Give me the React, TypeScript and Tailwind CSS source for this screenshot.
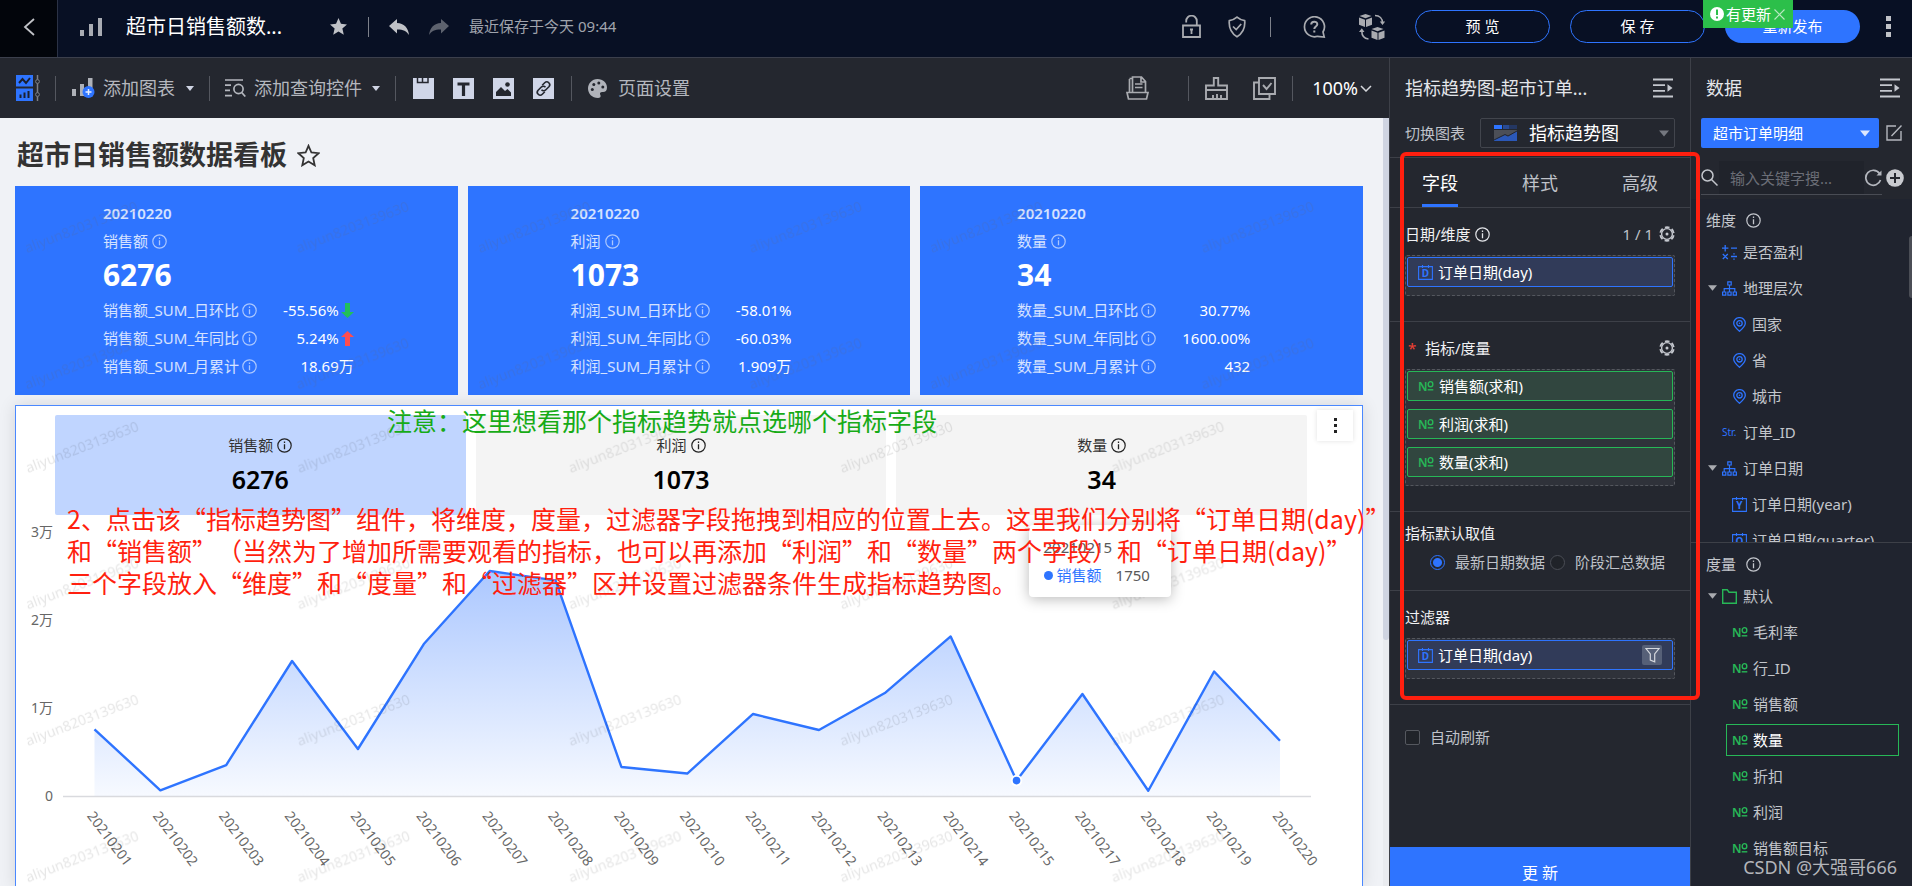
import type { ReactNode } from 'react'
import clsx from 'clsx'

const kpiCards = [
  {
    name: '销售额',
    value: '6276',
    rows: [
      { label: '销售额_SUM_日环比', value: '-55.56%', trend: 'down' },
      { label: '销售额_SUM_年同比', value: '5.24%', trend: 'up' },
      { label: '销售额_SUM_月累计', value: '18.69万', trend: '' },
    ],
  },
  {
    name: '利润',
    value: '1073',
    rows: [
      { label: '利润_SUM_日环比', value: '-58.01%', trend: '' },
      { label: '利润_SUM_年同比', value: '-60.03%', trend: '' },
      { label: '利润_SUM_月累计', value: '1.909万', trend: '' },
    ],
  },
  {
    name: '数量',
    value: '34',
    rows: [
      { label: '数量_SUM_日环比', value: '30.77%', trend: '' },
      { label: '数量_SUM_年同比', value: '1600.00%', trend: '' },
      { label: '数量_SUM_月累计', value: '432', trend: '' },
    ],
  },
]

const series = [
  { date: '20210201', value: 7580 },
  { date: '20210202', value: 650 },
  { date: '20210203', value: 3520 },
  { date: '20210204', value: 15340 },
  { date: '20210205', value: 5340 },
  { date: '20210206', value: 17270 },
  { date: '20210207', value: 25570 },
  { date: '20210208', value: 24500 },
  { date: '20210209', value: 3300 },
  { date: '20210210', value: 2550 },
  { date: '20210211', value: 9320 },
  { date: '20210212', value: 7500 },
  { date: '20210213', value: 11700 },
  { date: '20210214', value: 18130 },
  { date: '20210215', value: 1750 },
  { date: '20210217', value: 11590 },
  { date: '20210218', value: 600 },
  { date: '20210219', value: 14150 },
  { date: '20210220', value: 6276 },
]

const CHART_W = 1346
const CHART_H = 371
const BASE_Y = 281
const ACTIVE = 14

const px = (i: number) => 78.5 + i * 65.86
const py = (v: number) => BASE_Y - (v * 88) / 10000

/* ---------- icons ---------- */

function InfoIcon({ className }: { className?: string }) {
  return (
    <svg viewBox="0 0 15 15" className={clsx('shrink-0 w-[15px] h-[15px]', className)} fill="none" stroke="currentColor">
      <circle cx="7.5" cy="7.5" r="6.7" strokeWidth="1.2" />
      <path d="M7.5 6.3v5M7.5 3.6v1.4" strokeWidth="1.3" />
    </svg>
  )
}

function GearIcon() {
  return (
    <svg viewBox="0 0 16 16" className="w-4 h-4 text-[#c4c7ce]" fill="none" stroke="currentColor">
      <circle cx="8" cy="8" r="5.4" strokeWidth="1.4" />
      <circle cx="8" cy="8" r="6.8" strokeWidth="1.8" strokeDasharray="4.6 2.520" strokeDashoffset="-1.260" />
      <circle cx="8" cy="8" r="1.5" fill="currentColor" stroke="none" />
    </svg>
  )
}

function CollapseIcon() {
  return (
    <svg viewBox="0 0 20 20" className="w-5 h-5 text-[#c4c7ce]" fill="none" stroke="currentColor" strokeWidth="1.8">
      <path d="M0 1.5h20M0 7.2h12M0 12.8h12M0 18.5h20" />
      <path d="M14.5 6.2 19.5 10l-5 3.8z" fill="currentColor" stroke="none" />
    </svg>
  )
}

function Caret({ className }: { className?: string }) {
  return (
    <svg viewBox="0 0 10 6" className={clsx('shrink-0', className)} fill="currentColor">
      <path d="M0 0h10L5 6z" />
    </svg>
  )
}

function DateIcon({ letter }: { letter: string }) {
  return (
    <svg viewBox="0 0 15 15" className="shrink-0 w-[15px] h-[15px] text-[#2e74ff]" fill="none" stroke="currentColor">
      <path d="M.6 1.6h13.8v12.8H.6zM4.5 0v3M10.5 0v3" strokeWidth="1.1" />
      <text x="7.5" y="11.8" textAnchor="middle" fontSize="10" fontWeight="700" fill="currentColor" stroke="none">{letter}</text>
    </svg>
  )
}

function NumIcon() {
  return (
    <svg viewBox="0 0 16 14" className="shrink-0 w-4 h-[14px] text-[#27b757]" fill="none" stroke="currentColor" strokeWidth="1.4">
      <text x="0" y="11.500" fontSize="12" fontWeight="600" fill="currentColor" stroke="none">N</text>
      <ellipse cx="12.500" cy="5.200" rx="2.300" ry="2.600" />
      <path d="M9.700 10.800h5.600" />
    </svg>
  )
}

function PinIcon() {
  return (
    <svg viewBox="0 0 15 15" className="shrink-0 w-[15px] h-[15px] text-[#2e74ff]" fill="none" stroke="currentColor" strokeWidth="1.3">
      <path d="M7.5 14.3C4 11.2 1.7 9 1.7 6.2a5.8 5.6 0 0 1 11.6 0c0 2.8-2.3 5-5.8 8.1z" />
      <circle cx="7.5" cy="6.3" r="2.7" />
      <circle cx="7.5" cy="6.3" r=".8" fill="currentColor" stroke="none" />
    </svg>
  )
}

function TreeIcon() {
  return (
    <svg viewBox="0 0 15 15" className="shrink-0 w-[15px] h-[15px] text-[#2e74ff]" fill="none" stroke="currentColor" strokeWidth="1.2">
      <path d="M5.8.8h3.4V4H5.8zM.6 11h3.2v3.2H.6zM5.9 11h3.2v3.2H5.9zM11.2 11h3.2v3.2h-3.2zM7.5 4v7M2.2 11V7.6h10.6V11" />
    </svg>
  )
}

function CalcIcon() {
  return (
    <svg viewBox="0 0 15 15" className="shrink-0 w-[15px] h-[15px] text-[#2e74ff]" fill="none" stroke="currentColor" strokeWidth="1.3">
      <path d="M3.2 0v6.4M0 3.2h6.4M9 3.2h6M.8 9l5 5M5.8 9l-5 5M9 11.5h6M11.3 8.8h1.4M11.3 14.2h1.4" />
    </svg>
  )
}

function FolderIcon() {
  return (
    <svg viewBox="0 0 15 15" className="shrink-0 w-[15px] h-[15px] text-[#27b757]" fill="none" stroke="currentColor" strokeWidth="1.4">
      <path d="M.7.8h4.6L7 3.2h7.3v11H.7z" />
    </svg>
  )
}

function Divider({ className }: { className?: string }) {
  return <span className={clsx('w-px shrink-0', className)} />
}

/* ---------- header ---------- */

function Header() {
  return (
    <header className="flex h-[58px] shrink-0 border-b border-[#3b3f4c] bg-[#081024] text-[#c0c2c7]">
      <button aria-label="返回" className="flex items-center justify-center w-[58px] pb-1 border-r border-[#2b3245] bg-[#02050b]">
        <svg viewBox="0 0 12 18" className="w-3 h-[18px]" fill="none" stroke="currentColor" strokeWidth="1.8">
          <path d="M11 1 2 9l9 8" />
        </svg>
      </button>
      <div className="flex flex-1 items-center pb-1">
        <svg viewBox="0 0 22 18" className="ml-[22px] w-[22px] h-[18px]" fill="#a9acb3">
          <path d="M0 12h4v6H0zM9 6h4v12H9zM18 0h4v18h-4z" />
        </svg>
        <h1 className="ml-6 text-xl font-normal text-white">超市日销售额数...</h1>
        <button aria-label="收藏" className="ml-12">
          <svg viewBox="0 0 18 18" className="w-[17px] h-[17px]" fill="currentColor">
            <path d="m9 0 2.6 6.2 6.4.6-4.9 4.3 1.5 6.6L9 14.2l-5.6 3.5 1.5-6.6L0 6.8l6.4-.6z" />
          </svg>
        </button>
        <Divider className="ml-[21px] h-5 bg-[#7d818b]" />
        <button aria-label="撤销" className="ml-5">
          <svg viewBox="0 0 20 16" className="w-5 h-4" fill="currentColor">
            <path d="M8 0v4c7 .4 11 4.400 12 12-2.500-4-6-5.600-12-5.500V14.500L0 7z" />
          </svg>
        </button>
        <button aria-label="重做" className="ml-5 text-[#5d626e]">
          <svg viewBox="0 0 20 16" className="w-5 h-4" fill="currentColor">
            <path d="M12 0v4C5 4.400 1 8.400 0 16c2.500-4 6-5.600 12-5.500V14.500L20 7z" />
          </svg>
        </button>
        <span className="ml-5 text-[15px] text-[#a0a4ad]">最近保存于今天 09:44</span>

        <div className="flex items-center ml-auto pr-[21px]">
          <svg viewBox="0 0 19 23" className="mr-[27px] w-[19px] h-[23px]" fill="none" stroke="#a9abb0" strokeWidth="1.8">
            <path d="M1 10.500h17V22H1zM4.200 7.500V6a5.300 5.300 0 0 1 10.600 0v4.500" />
            <path d="M9.500 14v5M8 14.500h3" />
          </svg>
          <svg viewBox="0 0 18 22" className="mr-6 w-[18px] h-[22px]" fill="none" stroke="#a9abb0" strokeWidth="1.700">
            <path d="M9 1.200c2.300 2 4.800 3 7.700 3.500.6 7-1.700 12.500-7.700 16-6-3.500-8.300-9-7.700-16C4.200 4.200 6.700 3.200 9 1.200z" />
            <path d="m5 10.500 3.200 3 5-5.500" />
          </svg>
          <Divider className="mr-8 h-5 bg-[#7d818b]" />
          <svg viewBox="0 0 23 22" className="mr-[33px] w-[23px] h-[22px]" fill="none" stroke="#a9abb0" strokeWidth="1.700">
            <path d="M20 16a10 10 0 1 0-5.500 4.300l6.700.7z" />
            <path d="M8.200 8.500c0-3.800 6.100-3.700 6.100-.2 0 2.200-3 2.400-3 4.700M11.300 14.500v2" strokeWidth="2" />
          </svg>
          <svg viewBox="0 0 26 26" className="w-[26px] h-[26px]" fill="#a9abb0">
            <path d="m6.500 0 6 2-6 2.200-6-2.200zM0 3.500 6 5.700V13l-6-2.200zM13 3.500 7 5.700V13l6-2.200zM18.500 13l6 2-6 2.200-6-2.200zM12.500 16.500l6 2.200V26l-6-2.200zM25.500 16.500l-6 2.200V26l6-2.200z" />
            <path d="M16 1.500c4.500 0 7.500 3 7.500 7.500M9.500 25C5 24.500 2.800 21.500 2.800 17" fill="none" stroke="#a9abb0" strokeWidth="1.600" />
            <path d="M20.800 7.500h5.400L23.500 11zM0 18h5.500L2.800 14.200z" />
          </svg>
          <div className="flex gap-5 ml-[30px] text-[15px] text-white">
            <button className="w-[135px] h-[33px] rounded-full border border-[#2e74ff]">预 览</button>
            <button className="w-[135px] h-[33px] rounded-full border border-[#2e74ff]">保 存</button>
            <div className="relative">
              <button className="w-[135px] h-[33px] rounded-full bg-[#2e74ff]">重新发布</button>
              <div className="absolute -left-[22px] -top-[10px] flex items-center w-[90px] h-7 pl-[7px] bg-[#2cbf4a]">
                <svg viewBox="0 0 14 14" className="w-[14px] h-[14px] mr-[2px] shrink-0">
                  <circle cx="7" cy="7" r="7" fill="#fff" />
                  <path d="M7 2.500v5.500M7 9.600v1.800" stroke="#2cbf4a" strokeWidth="2" />
                </svg>
                <span className="text-[15px]">有更新</span>
                <button aria-label="关闭" className="ml-[3px]">
                  <svg viewBox="0 0 11 11" className="w-[11px] h-[11px]" stroke="#b9e8c2" strokeWidth="1.200">
                    <path d="m.5.5 10 10M10.500.5l-10 10" />
                  </svg>
                </button>
              </div>
            </div>
          </div>
          <button aria-label="更多" className="flex flex-col gap-[3px] ml-[26px]">
            <span className="size-[5px] bg-[#c0c2c7]" />
            <span className="size-[5px] bg-[#c0c2c7]" />
            <span className="size-[5px] bg-[#c0c2c7]" />
          </button>
        </div>
      </div>
    </header>
  )
}

/* ---------- toolbar ---------- */

function SquareTool({ label, children }: { label: string; children: ReactNode }) {
  return (
    <button aria-label={label}>
      <svg viewBox="0 0 21 21" className="w-[21px] h-[21px]">
        {children}
      </svg>
    </button>
  )
}

function Toolbar() {
  return (
    <div className="flex items-center h-[60px] shrink-0 pl-4 pr-[17px] text-lg text-[#b4b7be]">
      <button aria-label="布局">
        <svg viewBox="0 0 24 26" className="w-6 h-[26px]" fill="none">
          <path d="M0 0h17v11.500H0zM0 13.500h17V26H0z" fill="#2e74ff" />
          <path d="m3 8 3.500-4 3.500 4 4-5M4.500 23v-3.500M8.500 23v-5.500M12.500 23v-7" stroke="#1b2030" strokeWidth="2" />
          <path d="M21.500 0v26" stroke="#7c7f87" strokeWidth="1.500" />
          <circle cx="21.500" cy="6.500" r="1.900" fill="#24272f" stroke="#7c7f87" />
          <circle cx="21.500" cy="19.500" r="1.900" fill="#24272f" stroke="#7c7f87" />
        </svg>
      </button>
      <Divider className="ml-[15px] h-[25px] bg-[#54575f]" />
      <button className="flex items-center ml-4">
        <svg viewBox="0 0 23 20" className="w-[23px] h-5 mr-2">
          <path d="M0 11h4v7H0zM8 6h4v12H8zM16 0h4.500v14H16z" fill="#aeb1b8" />
          <circle cx="16.500" cy="14" r="6" fill="#2e74ff" />
          <path d="M16.500 11v6M13.500 14h6" stroke="#e8efff" strokeWidth="1.500" />
        </svg>
        添加图表
        <Caret className="ml-[11px] w-2 h-[5px] text-[#cfd4e3]" />
      </button>
      <Divider className="ml-[15px] h-[25px] bg-[#54575f]" />
      <button className="flex items-center ml-[15px]">
        <svg viewBox="0 0 21 18" className="w-[21px] h-[18px] mr-2" fill="none" stroke="#b4b7be" strokeWidth="1.700">
          <path d="M0 1h18M0 6.200h6M0 11.400h5M0 16.600h7" />
          <circle cx="13.500" cy="10" r="4.600" />
          <path d="m16.700 13.500 3.600 4" />
        </svg>
        添加查询控件
        <Caret className="ml-[10px] w-2 h-[5px] text-[#cfd4e3]" />
      </button>
      <Divider className="ml-[15px] h-[25px] bg-[#54575f]" />
      <div className="flex gap-[19px] ml-[17px]">
        <SquareTool label="标签页">
          <path d="M0 0h21v21H0z" fill="#d0d6e8" />
          <path d="M4.500 0v4.500h5V0M9.500 4.500h5.500V0" fill="none" stroke="#24272f" strokeWidth="1.500" />
        </SquareTool>
        <SquareTool label="文本">
          <path d="M0 0h21v21H0z" fill="#d0d6e8" />
          <path d="M4.500 6h12M10.500 6v12" stroke="#24272f" strokeWidth="3.200" />
        </SquareTool>
        <SquareTool label="图片">
          <path d="M0 0h21v21H0z" fill="#d0d6e8" />
          <path d="M3 18v-4l5-5 4 4 2.500-2 3.500 3.500V18z" fill="#24272f" />
          <circle cx="14.500" cy="6.500" r="2.300" fill="#24272f" />
        </SquareTool>
        <SquareTool label="链接">
          <path d="M0 0h21v21H0z" fill="#d0d6e8" />
          <g fill="none" stroke="#24272f" strokeWidth="1.600">
            <path d="m9.200 7.300 2.500-2.500c2.700-2.700 6.800 1.200 4.200 4l-3 3c-1.300 1.300-3.300 1.200-4.400 0" />
            <path d="m11.800 13.700-2.500 2.500c-2.700 2.700-6.800-1.200-4.200-4l3-3c1.300-1.300 3.300-1.200 4.400 0" />
          </g>
        </SquareTool>
      </div>
      <Divider className="ml-[17px] h-[25px] bg-[#54575f]" />
      <button className="flex items-center ml-4">
        <svg viewBox="0 0 19 19" className="w-[19px] h-[19px] mr-[11px]">
          <path d="M9.500 0C15 0 19 4 19 8.500c0 3-1.500 4.500-4 4.500-3 0-3.500 1-2.500 3.200.6 1.600-.5 2.800-2.500 2.800C4 19 0 14.500 0 9.500S4 0 9.500 0z" fill="#b0b3ba" />
          <g fill="#24272f">
            <circle cx="4.300" cy="10.500" r="1.500" />
            <circle cx="5.800" cy="5.500" r="1.500" />
            <circle cx="10.800" cy="4" r="1.500" />
            <circle cx="14.800" cy="8" r="1.500" />
          </g>
        </svg>
        页面设置
      </button>

      <div className="flex items-center ml-auto">
        <svg viewBox="0 0 23 24" className="mr-[39px] w-[23px] h-6" fill="none" stroke="#a9abb0" strokeWidth="1.700">
          <path d="M3.500 16V3M3.500 2.500h3M6.500 16V1h9l4 4.500V16M15 1v5h4.500M9 8h7.500M9 11.500h7.500" />
          <path d="M1 16.500h21l-1.500 6.500h-18z" />
        </svg>
        <Divider className="mr-4 h-[25px] bg-[#54575f]" />
        <svg viewBox="0 0 23 23" className="mr-[25px] w-[23px] h-[23px]" fill="none" stroke="#a9abb0" strokeWidth="1.900">
          <path d="M1 8.500h7.800V1h4.400v7.500H22V22H1zM1 13h21M8 22v-4M12 22v-5M16 22v-4" />
        </svg>
        <svg viewBox="0 0 23 23" className="mr-4 w-[23px] h-[23px]" fill="none" stroke="#a9abb0" strokeWidth="1.900">
          <path d="M6 1h16v16H6zM6 5.500H1V22h15.500v-5" />
          <path d="m10 8 3.500 4 5-6" />
        </svg>
        <Divider className="h-[25px] bg-[#54575f]" />
        <button className="flex items-center ml-[19px] text-white">
          100%
          <svg viewBox="0 0 12 7" className="ml-[2px] w-3 h-[7px]" fill="none" stroke="#d5d7db" strokeWidth="1.500">
            <path d="m1 1 5 5 5-5" />
          </svg>
        </button>
      </div>
    </div>
  )
}

/* ---------- canvas ---------- */

// repeated account watermark, drawn over each component on the board
function Watermark({ id, color }: { id: string; color: string }) {
  return (
    <svg className="absolute inset-0 w-full h-full pointer-events-none" aria-hidden="true">
      <defs>
        <pattern id={id} width="271.400" height="136.500" patternUnits="userSpaceOnUse">
          <text x="66" y="46" textAnchor="middle" fontSize="14" fill={color} transform="rotate(-21 66 41)">
            aliyun8203139630
          </text>
        </pattern>
      </defs>
      <rect width="100%" height="100%" fill={`url(#${id})`} />
    </svg>
  )
}

function KpiCard({ card, index }: { card: (typeof kpiCards)[number]; index: number }) {
  return (
    <section className="relative flex justify-center h-[209px] pt-4 pr-4 bg-[#2e74ff] text-[15px] leading-[22px] text-white">
      <div>
        <p className="font-semibold text-white/80">20210220</p>
        <p className="flex items-center gap-1 mt-[6px] text-white/80">
          {card.name}
          <InfoIcon className="text-white/60" />
        </p>
        <p className="mt-[6px] text-[30px] leading-[34px] font-bold">{card.value}</p>
        <dl className="grid grid-cols-[auto_auto] gap-x-[26px] gap-y-[6px] mt-[7px]">
          {card.rows.map((row) => (
            <div key={row.label} className="contents">
              <dt className="flex items-center gap-[3px] text-white/80">
                {row.label}
                <InfoIcon className="text-white/60" />
              </dt>
              <dd className="flex items-center justify-end">
                {row.value}
                {row.trend && (
                  <svg viewBox="0 0 13 15" className={clsx('w-[13px] h-[15px] ml-[2px]', row.trend === 'down' ? 'rotate-180 text-[#22bf5b]' : 'text-[#ff4d4f]')} fill="currentColor">
                    <path d="M6.500 0 13 6H9v9H4V6H0z" />
                  </svg>
                )}
              </dd>
            </div>
          ))}
        </dl>
      </div>
      <Watermark id={`wm-kpi-${index}`} color="rgba(90,100,130,0.22)" />
    </section>
  )
}

function TrendChart() {
  const line = series.map((p, i) => `${px(i)},${py(p.value)}`).join(' ')
  const area = `${px(0)},${BASE_Y} ${line} ${px(series.length - 1)},${BASE_Y}`
  const active = series[ACTIVE]

  return (
    <svg viewBox={`0 0 ${CHART_W} ${CHART_H}`} className="block w-full" fontSize="14" fill="#666">
      <defs>
        <linearGradient id="area" gradientUnits="userSpaceOnUse" x1="0" y1="56" x2="0" y2={BASE_Y}>
          <stop offset="0" stopColor="#2e74ff" stopOpacity="0.400" />
          <stop offset="1" stopColor="#2e74ff" stopOpacity="0.040" />
        </linearGradient>
      </defs>
      {['0', '1万', '2万', '3万'].map((label, i) => (
        <text key={label} x="37" y={BASE_Y - i * 88 + 5} textAnchor="end">{label}</text>
      ))}
      <path d={`M47 ${BASE_Y + 0.5}h1248`} stroke="#d9dade" strokeWidth="1.500" />
      <polygon points={area} fill="url(#area)" />
      <polyline points={line} fill="none" stroke="#2e74ff" strokeWidth="2.400" strokeLinejoin="round" />
      <circle cx={px(ACTIVE)} cy={py(active.value)} r="4.800" fill="#2e74ff" stroke="#fff" strokeWidth="2" />
      {series.map((p, i) => (
        <text key={p.date} x="0" y="0" transform={`translate(${px(i) - 8} ${BASE_Y + 20}) rotate(53)`}>
          {p.date}
        </text>
      ))}
    </svg>
  )
}

function ChartTooltip() {
  return (
    <div
      className="absolute top-[119px] w-[142px] h-[72px] pt-[11px] pl-[15px] rounded bg-white text-[15px] leading-[22px] text-[#595959] shadow-[0_2px_14px_rgba(0,0,0,0.28)]"
      style={{ left: `${((px(ACTIVE) + 12) / CHART_W) * 100}%` }}
    >
      <p>{series[ACTIVE].date}</p>
      <p className="flex items-center mt-[6px]">
        <span className="mr-1 size-[9px] rounded-full bg-[#2e74ff]" />
        <span className="text-[#2e74ff]">销售额</span>
        <span className="ml-[14px]">{series[ACTIVE].value}</span>
      </p>
    </div>
  )
}

function TrendCard() {
  return (
    <section className="relative mt-[10px] border border-[#4a88ff] bg-white shadow-[0_0_16px_rgba(0,0,0,0.12)]">
      <div className="grid grid-cols-3 gap-[10px] pt-[9px] pl-[39px] pr-[55px]">
        {kpiCards.map((card, i) => (
          <button
            key={card.name}
            className={clsx('flex flex-col items-center h-[100px] pt-[19px] rounded-xs', i === 0 ? 'bg-[#c0d5ff]' : 'bg-[#f4f4f4]')}
          >
            <span className="flex items-center gap-1 text-[15px] leading-[22px] text-[#333]">
              {card.name}
              <InfoIcon className="text-[#222]" />
            </span>
            <span className="mt-[6px] text-[25px] leading-[34px] font-semibold text-black">{card.value}</span>
          </button>
        ))}
      </div>
      <TrendChart />
      <Watermark id="wm-trend" color="rgba(0,0,0,0.1)" />
      <ChartTooltip />
      <button aria-label="更多操作" className="absolute right-[9px] top-1 flex flex-col items-center justify-center gap-[3px] w-9 h-[31px] bg-white shadow-[0_0_5px_rgba(0,0,0,0.12)]">
        <span className="size-[3px] bg-[#222]" />
        <span className="size-[3px] bg-[#222]" />
        <span className="size-[3px] bg-[#222]" />
      </button>
      <p className="absolute left-[371px] -top-[2px] text-[25px] leading-8 whitespace-nowrap text-[#17ab17] font-['Noto_Sans_CJK_SC',sans-serif] [text-spacing-trim:space-all]">
        注意：这里想看那个指标趋势就点选哪个指标字段
      </p>
      <p className="absolute left-[51px] top-24 text-[25px] leading-8 whitespace-nowrap text-[#ff1f0f] font-['Noto_Sans_CJK_SC',sans-serif] [text-spacing-trim:space-all]">
        2、点击该“指标趋势图”组件，将维度，度量，过滤器字段拖拽到相应的位置上去。这里我们分别将“订单日期(day)”
        <br />
        和“销售额”（当然为了增加所需要观看的指标，也可以再添加“利润”和“数量”两个字段）和“订单日期(day)”
        <br />
        三个字段放入“维度”和“度量”和“过滤器”区并设置过滤器条件生成指标趋势图。
      </p>
    </section>
  )
}

function Board() {
  return (
    <main className="flex flex-1 min-h-0 bg-[#f0f2f6]">
      <div className="flex-1 min-w-0 pl-[15px] pr-5">
        <div className="flex items-center h-[68px] pt-[6px] pl-[2px]">
          <h2 className="text-[27px] leading-9 font-bold text-[#333]">超市日销售额数据看板</h2>
          <button aria-label="收藏" className="ml-[10px]">
            <svg viewBox="0 0 23 23" className="w-[23px] h-[23px]" fill="none" stroke="#333" strokeWidth="1.800">
              <path d="m11.500 1.800 2.900 6.700 7.200.7-5.400 4.900 1.500 7.200-6.200-3.700-6.200 3.700 1.500-7.200-5.400-4.900 7.200-.7z" />
            </svg>
          </button>
        </div>
        <div className="grid grid-cols-3 gap-[10px]">
          {kpiCards.map((card, i) => (
            <KpiCard key={card.name} card={card} index={i} />
          ))}
        </div>
        <TrendCard />
      </div>
      <div className="w-[6px] bg-[#e9ebef]">
        <div className="h-[68%] rounded-b bg-[#cfd4e1]" />
      </div>
    </main>
  )
}

/* ---------- config panel ---------- */

function DropBox({ children }: { children: ReactNode }) {
  return (
    <div className="flex flex-col gap-2 mt-[10px] pt-px px-px pb-2 rounded-xs border border-dashed border-[#54575e] bg-[#2f323a]">
      {children}
    </div>
  )
}

function Chip({ icon, label, green, children }: { icon: ReactNode; label: string; green?: boolean; children?: ReactNode }) {
  return (
    <div
      className={clsx(
        'flex items-center gap-[5px] h-[30px] pl-[10px] pr-[10px] rounded-xs border text-white',
        green ? 'border-[#27b757] bg-[#31463f]' : 'border-[#2e74ff] bg-[#313b59]'
      )}
    >
      {icon}
      {label}
      {children}
    </div>
  )
}

function ConfigPanel() {
  return (
    <aside className="relative flex flex-col w-[301px] shrink-0 border-l border-[#3d4048] bg-[#24272f] text-[15px] leading-[22px] text-[#bfc2c9]">
      <div className="flex items-center justify-between h-[60px] shrink-0 pl-[15px] pr-[17px]">
        <h2 className="text-lg text-[#e3e5e9]">指标趋势图-超市订单...</h2>
        <button aria-label="收起"><CollapseIcon /></button>
      </div>
      <div className="flex items-start h-10 shrink-0 px-[15px] border-b border-[#3d4048]">
        <label htmlFor="chart-type" className="leading-[30px]">切换图表</label>
        <div className="relative ml-auto">
          <select id="chart-type" className="block appearance-none w-[195px] h-[30px] pl-12 rounded-xs border border-[#42454d] bg-transparent text-lg leading-7 text-white">
            <option>指标趋势图</option>
          </select>
          <svg viewBox="0 0 23 16" className="absolute left-[14px] top-[7px] w-[23px] h-4 pointer-events-none">
            <path d="M0 0h8v4H0z" fill="#2e74ff" />
            <path d="M9 0h6v4H9z" fill="#284a94" />
            <path d="M15 0h8v4h-8z" fill="#243763" />
            <path d="M0 5h23v11H0z" fill="#4c4f57" />
            <path d="M0 16v-1.500l6-2.500 5-2 3 1.500 9-5.500V16z" fill="#2b58b8" />
            <path d="m0 15 6-3 5-2.500 3 1.500 9-5" fill="none" stroke="#20242f" />
          </svg>
          <Caret className="absolute right-[6px] top-3 w-[10px] h-[7px] text-[#74777f] pointer-events-none" />
        </div>
      </div>
      <nav className="flex justify-between h-[50px] shrink-0 px-8 border-b border-[#3d4048] text-lg">
        <button className="pt-1 border-b-3 border-[#2e74ff] text-white">字段</button>
        <button className="pt-1 border-b-3 border-transparent">样式</button>
        <button className="pt-1 border-b-3 border-transparent">高级</button>
      </nav>

      <section className="pt-[15px] px-[15px] pb-[25px] border-b border-[#3d4048]">
        <div className="flex items-center">
          <h3 className="text-[#f0f1f3]">日期/维度</h3>
          <InfoIcon className="ml-1 text-[#e3e5e9]" />
          <span className="ml-auto mr-[6px]">1 / 1</span>
          <button aria-label="设置"><GearIcon /></button>
        </div>
        <DropBox>
          <Chip icon={<DateIcon letter="D" />} label="订单日期(day)" />
        </DropBox>
      </section>

      <section className="pt-[15px] px-[15px] pb-[25px] border-b border-[#3d4048]">
        <div className="flex items-center">
          <span className="w-5 pl-[3px] text-[#f04134]">*</span>
          <h3 className="text-[#f0f1f3]">指标/度量</h3>
          <button aria-label="设置" className="ml-auto"><GearIcon /></button>
        </div>
        <DropBox>
          {['销售额(求和)', '利润(求和)', '数量(求和)'].map((label) => (
            <Chip key={label} green icon={<NumIcon />} label={label} />
          ))}
        </DropBox>
      </section>

      <section className="pt-[10px] px-[15px] pb-[17px] border-b border-[#3d4048]">
        <h3 className="text-[#f0f1f3]">指标默认取值</h3>
        <div className="flex items-center gap-[5px] mt-[7px] pl-[25px]">
          <label className="flex items-center gap-[10px]">
            <input
              type="radio"
              name="default-value"
              defaultChecked
              className="appearance-none size-[15px] rounded-full border border-[#2e74ff] bg-[radial-gradient(circle,#2e74ff_0_4px,transparent_5px)]"
            />
            最新日期数据
          </label>
          <label className="flex items-center gap-[10px]">
            <input type="radio" name="default-value" className="appearance-none size-[15px] rounded-full border border-[#4a4d55] bg-[#202329]" />
            阶段汇总数据
          </label>
        </div>
      </section>

      <section className="pt-[15px] px-[15px] pb-[25px] border-b border-[#3d4048]">
        <h3 className="text-[#f0f1f3]">过滤器</h3>
        <DropBox>
          <Chip icon={<DateIcon letter="D" />} label="订单日期(day)">
            <button aria-label="过滤条件" className="flex items-center justify-center ml-auto size-5 rounded-xs bg-[#566078]">
              <svg viewBox="0 0 15 16" className="w-[15px] h-4" fill="none" stroke="#d5d8de" strokeWidth="1.200">
                <path d="M1 1.500h13L9.700 7v7.800L5.300 13V7z" />
              </svg>
            </button>
          </Chip>
        </DropBox>
      </section>

      <label className="flex items-center gap-[10px] pt-[21px] px-[15px]">
        <input type="checkbox" className="appearance-none size-[15px] rounded-xs border border-[#55585f] bg-[#202329]" />
        自动刷新
      </label>
      <button className="mt-auto h-[39px] shrink-0 pt-[13px] bg-[#2e74ff] text-base leading-[26px] text-white">更 新</button>

      {/* callout round the field settings */}
      <div className="absolute left-[10px] -right-[10px] top-[94px] h-[548px] z-10 rounded-md border-4 border-[#ff1f0f] pointer-events-none" />
    </aside>
  )
}

/* ---------- data panel ---------- */

function ParentRow({ icon, label }: { icon: ReactNode; label: string }) {
  return (
    <li className="flex items-center h-9 pl-[17px]">
      <Caret className="w-[9px] h-[6px] mr-[5px] text-[#a9abb0]" />
      {icon}
      <span className="ml-[6px]">{label}</span>
    </li>
  )
}

function LeafRow({ icon, label }: { icon: ReactNode; label: string }) {
  return (
    <li className="flex items-center h-9 pl-[31px]">
      {icon}
      <span className="ml-[6px]">{label}</span>
    </li>
  )
}

function ChildRow({ icon, label, selected }: { icon: ReactNode; label: string; selected?: boolean }) {
  return (
    <li className="h-9 py-[2px] pl-[35px] pr-[13px]">
      <div
        className={clsx(
          'flex items-center h-8 pl-[5px] gap-[5px] border whitespace-nowrap',
          selected ? 'border-[#27b757] text-white' : 'border-transparent'
        )}
      >
        {icon}
        <span>{label}</span>
      </div>
    </li>
  )
}

const measures = ['毛利率', '行_ID', '销售额', '数量', '折扣', '利润', '销售额目标']

function DataPanel() {
  return (
    <aside className="relative flex flex-col w-[222px] shrink-0 border-l border-[#3d4048] bg-[#24272f] text-[15px] leading-[22px] text-[#c3c6cc]">
      <div className="flex items-center justify-between h-[60px] shrink-0 pl-[15px] pr-3">
        <h2 className="text-lg text-[#e3e5e9]">数据</h2>
        <button aria-label="收起"><CollapseIcon /></button>
      </div>
      <div className="flex items-center shrink-0 pl-[10px]">
        <div className="relative">
          <select aria-label="数据集" className="block appearance-none w-[178px] h-[30px] pl-3 rounded-xs bg-[#2e74ff] text-white">
            <option>超市订单明细</option>
          </select>
          <Caret className="absolute right-[9px] top-3 w-[10px] h-[7px] text-[#dce7ff] pointer-events-none" />
        </div>
        <button aria-label="编辑" className="ml-[7px]">
          <svg viewBox="0 0 16 16" className="w-4 h-4" fill="none" stroke="#b4b7be" strokeWidth="1.400">
            <path d="M10 1H1v14h14V6M5.500 11 15.500.5" />
          </svg>
        </button>
      </div>
      <div className="flex items-center shrink-0 h-[34px] mt-[13px] pl-[10px]">
        <div className="flex items-center w-[181px] h-full border-b border-[#494c54]">
          <svg viewBox="0 0 17 17" className="w-[17px] h-[17px] mr-px shrink-0" fill="none" stroke="#c3c6cc" strokeWidth="1.500">
            <circle cx="6.500" cy="6.500" r="5.500" />
            <path d="m10.500 10.500 6 6" />
          </svg>
          <input aria-label="搜索字段" placeholder="输入关键字搜..." className="w-[145px] h-full pl-[11px] bg-[#20232b] placeholder:text-[#6b6e77] outline-none" />
          <svg viewBox="0 0 18 18" className="w-[18px] h-[18px] shrink-0" fill="none" stroke="#b4b7be" strokeWidth="1.700">
            <path d="M15.500 4.500A7.500 7.500 0 1 0 16.500 11" />
            <path d="M17.500 1.500v5h-5z" fill="#b4b7be" stroke="none" />
          </svg>
        </div>
        <button aria-label="新建字段" className="ml-1">
          <svg viewBox="0 0 18 18" className="w-[18px] h-[18px]">
            <circle cx="9" cy="9" r="8.800" fill="#c9cbd0" />
            <path d="M9 4v10M4 9h10" stroke="#24272f" strokeWidth="2" />
          </svg>
        </button>
      </div>

      <section className="relative h-[344px] shrink-0 mt-1 pt-[10px] overflow-hidden border-b border-[#3d4048] bg-[#20242f]">
        <h3 className="flex items-center gap-[10px] pl-[15px]">
          维度 <InfoIcon />
        </h3>
        <ul className="mt-[3px]">
          <LeafRow icon={<CalcIcon />} label="是否盈利" />
          <ParentRow icon={<TreeIcon />} label="地理层次" />
          <ChildRow icon={<PinIcon />} label="国家" />
          <ChildRow icon={<PinIcon />} label="省" />
          <ChildRow icon={<PinIcon />} label="城市" />
          <LeafRow icon={<span className="w-[15px] shrink-0 text-[10px] leading-4 text-[#2e74ff]">Str.</span>} label="订单_ID" />
          <ParentRow icon={<TreeIcon />} label="订单日期" />
          <ChildRow icon={<DateIcon letter="Y" />} label="订单日期(year)" />
          <ChildRow icon={<DateIcon letter="Q" />} label="订单日期(quarter)" />
        </ul>
        <div className="absolute right-0 top-[37px] w-[3px] h-[62px] rounded-l bg-[#4b4e56]" />
      </section>

      <section className="flex-1 min-h-0 pt-[10px] overflow-hidden bg-[#20242f]">
        <h3 className="flex items-center gap-[10px] pl-[15px]">
          度量 <InfoIcon />
        </h3>
        <ul className="mt-[3px]">
          <ParentRow icon={<FolderIcon />} label="默认" />
          {measures.map((name) => (
            <ChildRow key={name} icon={<NumIcon />} label={name} selected={name === '数量'} />
          ))}
        </ul>
      </section>
      <span className="absolute right-[15px] bottom-[7px] text-lg leading-6 whitespace-nowrap text-[#b3b5ba]">CSDN @大强哥666</span>
    </aside>
  )
}

export default function App() {
  return (
    <div lang="zh-CN" className="flex flex-col h-screen overflow-hidden bg-[#24272f] font-['Noto_Sans','Noto_Sans_CJK_SC',sans-serif]">
      <Header />
      <div className="flex flex-1 min-h-0">
        <div className="flex flex-col flex-1 min-w-0 overflow-hidden">
          <Toolbar />
          <Board />
        </div>
        <ConfigPanel />
        <DataPanel />
      </div>
    </div>
  )
}
